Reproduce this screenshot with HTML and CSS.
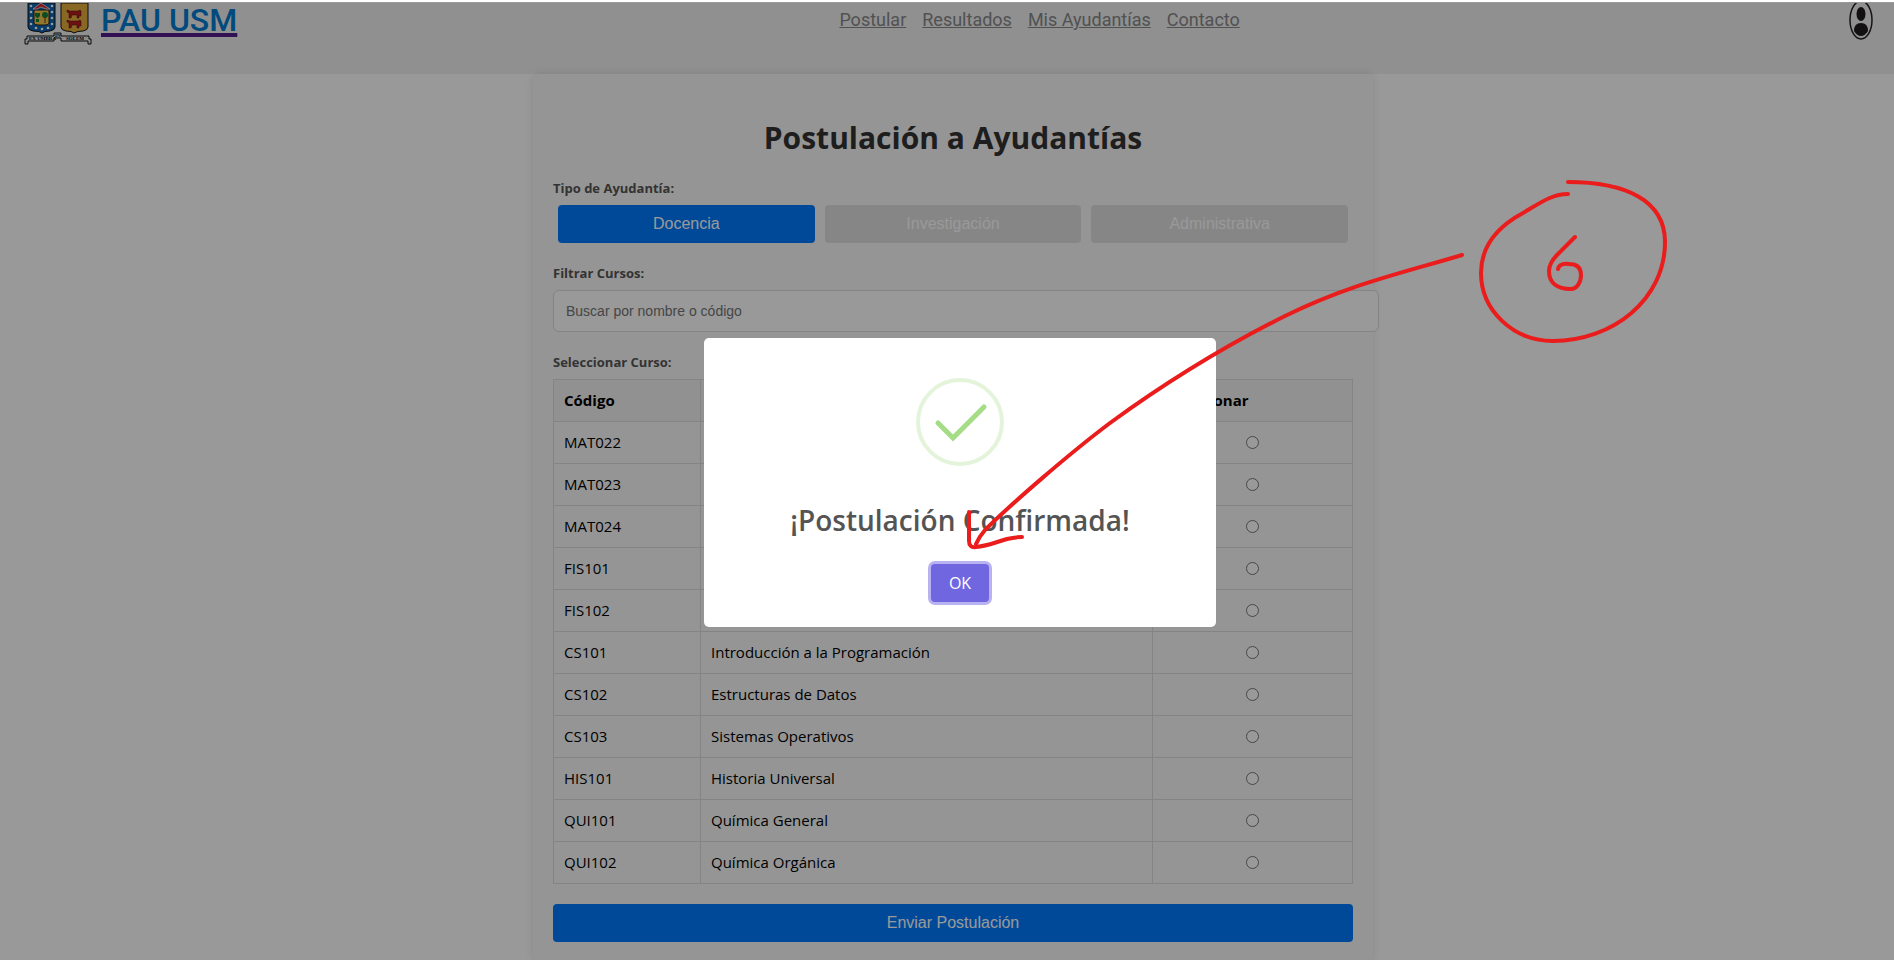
FILE: index.html
```html
<!DOCTYPE html>
<html lang="es">
<head>
<meta charset="utf-8">
<title>PAU USM</title>
<link rel="stylesheet" href="styles.css">
</head>
<body>
<div class="page">
  <header class="header">
    <a class="brand" href="#">
      <svg class="crest" viewBox="0 0 72 44" aria-hidden="true">
        <path d="M4 0H31V24Q31 27 26 28Q20 28 18 30Q16 28 9 28Q4 27 4 24Z" fill="#0c63b0" stroke="#111"/>
        <g fill="#fff"><circle cx="7" cy="3" r="1.3"/><circle cx="7" cy="9" r="1.3"/><circle cx="7" cy="15" r="1.3"/><circle cx="7" cy="21" r="1.3"/><circle cx="12" cy="25" r="1.3"/><circle cx="18" cy="26" r="1.3"/><circle cx="24" cy="25" r="1.3"/><circle cx="28" cy="21" r="1.3"/><circle cx="28" cy="15" r="1.3"/><circle cx="28" cy="9" r="1.3"/><circle cx="28" cy="3" r="1.3"/></g>
        <path d="M10 7H25V20Q25 22 21 22H14Q10 22 10 20Z" fill="#f2c54a" stroke="#222"/>
        <path d="M9 6L17 0L26 6H22L17 4L13 6Z" fill="#d9232e" stroke="#fff" stroke-width=".7"/>
        <path d="M11 10h5v3l-2 2h-1l-2-2zM12 16h3v3h-3z" fill="#16803a"/><circle cx="21" cy="12" r="3" fill="#16803a"/><path d="M21 14V20" stroke="#553a10"/>
        <path d="M37 0H64V24Q64 27 59 28Q53 28 50 30Q48 28 42 28Q37 27 37 24Z" fill="#e5ae3c" stroke="#111"/>
        <g fill="#b81c20" stroke="#401010" stroke-width=".5"><path d="M43 7l3 1h8l2-1 1 1v5h-2v2h-2v-3h-5l-1 3h-2v-5l-2-1z"/><path d="M43 17l3 1h8l2-1 1 1v5h-2v2h-2v-3h-5l-1 3h-2v-5l-2-1z"/></g>
        <path d="M3 33H30V30H37V33H65V36H67V41H64V38H37V35H30V38H4V41H1V36H3Z" fill="#e8e8e8" stroke="#111"/>
        <g class="motto"><text x="5" y="37">EX UMBRA</text><text x="31" y="34">IN</text><text x="42" y="37">SOLEM</text></g>
      </svg>
      <span class="brand-name">PAU USM</span>
    </a>
    <nav class="nav">
      <a href="#">Postular</a>
      <a href="#">Resultados</a>
      <a href="#">Mis Ayudantías</a>
      <a href="#">Contacto</a>
    </nav>
    <a class="user" href="#" aria-label="Perfil">
      <svg viewBox="0 0 26 38" aria-hidden="true"><ellipse cx="13" cy="17" rx="11" ry="19" fill="none" stroke="#222" stroke-width="1.5"/><ellipse cx="13" cy="11" rx="4.5" ry="7" fill="#201c1e"/><path d="M6 28Q6 20 13 20Q20 20 20 28Q17 33 13 33Q9 33 6 28Z" fill="#201c1e"/></svg>
    </a>
  </header>
  <main class="main">
    <form class="card">
      <h1>Postulación a Ayudantías</h1>
      <span class="label" id="tipo">Tipo de Ayudantía:</span>
      <div class="types" role="group" aria-labelledby="tipo">
        <button type="button" class="btn">Docencia</button>
        <button type="button" class="btn" disabled>Investigación</button>
        <button type="button" class="btn" disabled>Administrativa</button>
      </div>
      <label class="label" for="filtro">Filtrar Cursos:</label>
      <input class="filter" id="filtro" type="text" placeholder="Buscar por nombre o código">
      <span class="label" id="curso">Seleccionar Curso:</span>
      <table class="courses" aria-labelledby="curso">
        <colgroup><col class="col-code"><col><col class="col-select"></colgroup>
        <thead><tr><th>Código</th><th></th><th>Seleccionar</th></tr></thead>
        <tbody>
          <tr><td>MAT022</td><td></td><td><input type="radio" name="c" aria-label="MAT022"></td></tr>
          <tr><td>MAT023</td><td></td><td><input type="radio" name="c" aria-label="MAT023"></td></tr>
          <tr><td>MAT024</td><td></td><td><input type="radio" name="c" aria-label="MAT024"></td></tr>
          <tr><td>FIS101</td><td></td><td><input type="radio" name="c" aria-label="FIS101"></td></tr>
          <tr><td>FIS102</td><td></td><td><input type="radio" name="c" aria-label="FIS102"></td></tr>
          <tr><td>CS101</td><td>Introducción a la Programación</td><td><input type="radio" name="c" aria-label="CS101"></td></tr>
          <tr><td>CS102</td><td>Estructuras de Datos</td><td><input type="radio" name="c" aria-label="CS102"></td></tr>
          <tr><td>CS103</td><td>Sistemas Operativos</td><td><input type="radio" name="c" aria-label="CS103"></td></tr>
          <tr><td>HIS101</td><td>Historia Universal</td><td><input type="radio" name="c" aria-label="HIS101"></td></tr>
          <tr><td>QUI101</td><td>Química General</td><td><input type="radio" name="c" aria-label="QUI101"></td></tr>
          <tr><td>QUI102</td><td>Química Orgánica</td><td><input type="radio" name="c" aria-label="QUI102"></td></tr>
        </tbody>
      </table>
      <button type="submit" class="btn submit">Enviar Postulación</button>
    </form>
  </main>
</div>
<div class="overlay">
  <div class="modal" role="dialog" aria-modal="true" aria-labelledby="done">
    <svg class="check" viewBox="0 0 88 88" aria-hidden="true"><circle cx="44" cy="44" r="42" fill="none" stroke="#e4f4db" stroke-width="4"/><path d="M22 45L37 60L68 29" fill="none" stroke="#a5dc86" stroke-width="5" stroke-linecap="round"/></svg>
    <h2 id="done">¡Postulación Confirmada!</h2>
    <button type="button" class="ok">OK</button>
  </div>
</div>
<svg class="ink" width="1894" height="960" viewBox="0 0 1894 960" aria-hidden="true">
  <path d="M1462 255C1395 275 1348 285 1285 316C1225 346 1165 383 1110 423C1070 453 1010 505 985 530Q979 537 976 544"/>
  <path d="M969 512V541Q969 548 976 547C988 546 996 542 1007 539Q1015 537 1022 537"/>
  <path d="M1568 194C1552 194 1540 203 1523 213C1510 220 1481 237 1481 273C1481 310 1513 341 1553 341C1612 341 1665 300 1665 242C1665 200 1625 182 1568 182"/>
  <path d="M1575 237L1557 255C1551 261 1549 265 1549 271C1549 283 1557 289 1571 289C1577 289 1581 282 1581 275C1581 267 1576 264 1569 264C1562 263 1559 265 1558 269"/>
</svg>
</body>
</html>
```
FILE: styles.css
```css
body {
  margin: 0;
  background: #fff;
  font-family: "Segoe UI", "Open Sans", "Noto Sans", sans-serif;
}

.page {
  height: 100vh;
  box-sizing: border-box;
  padding-top: 3px;
  overflow: hidden;
}

.header {
  display: flex;
  justify-content: space-between;
  align-items: flex-start;
  min-height: 71px;
  padding: 0 15px 0 24px;
  box-sizing: border-box;
  background: #f0f0f0;
  font-family: Roboto, sans-serif;
}

.brand {
  display: flex;
  gap: 5px;
  color: #551a8b;
}

.crest {
  width: 72px;
  height: 44px;
}

.motto {
  font: bold 5px "Liberation Serif", serif;
}

.brand-name {
  font-size: 32px;
  font-weight: 500;
  line-height: 34px;
  color: #007cd0;
  text-decoration: underline #551a8b 3px;
  text-underline-offset: 3px;
}

.nav {
  display: flex;
  gap: 16px;
  font-size: 18px;
  line-height: 34px;
}

.nav a {
  color: #888;
}

.user {
  display: flex;
  justify-content: center;
  width: 37px;
}

.user svg {
  width: 26px;
  height: 38px;
}

.main {
  padding-left: 12px;
}

.card {
  max-width: 800px;
  margin: 0 auto;
  padding: 20px;
  border-radius: 8px;
  background: #f9f9f9;
  box-shadow: 0 0 10px rgba(0, 0, 0, 0.1);
}

.card h1 {
  margin: 20px 0 18px;
  font-size: 30px;
  line-height: 48px;
  text-align: center;
  color: #333;
}

.label {
  display: block;
  margin-bottom: 9px;
  font-size: 13px;
  font-weight: bold;
  line-height: 16px;
  color: #555;
}

.types {
  display: flex;
  margin-bottom: 22px;
}

.btn {
  flex: 1;
  margin: 0 5px;
  padding: 10px;
  border: 0;
  border-radius: 4px;
  background: #007bff;
  color: #fff;
  font: 16px/18px "Liberation Sans", Arial, sans-serif;
}

.btn:disabled {
  background: #e0e0e0;
}

.filter {
  box-sizing: content-box;
  width: 100%;
  height: 16px;
  margin: 0 0 22px;
  padding: 12px;
  border: 1px solid #ddd;
  border-radius: 6px;
  background: #fff;
  font: 14px/16px "Liberation Sans", Arial, sans-serif;
}

.courses {
  width: 100%;
  margin-bottom: 20px;
  border-collapse: collapse;
  table-layout: fixed;
}

.col-code {
  width: 147px;
}

.col-select {
  width: 200px;
}

.courses th,
.courses td {
  height: 21px;
  padding: 10px;
  border: 1px solid #ddd;
  font-size: 15px;
  line-height: 21px;
  text-align: left;
}

.courses th {
  background: #f2f2f2;
}

.courses td:last-child {
  padding: 0;
  text-align: center;
}

.courses input {
  display: block;
  margin: 0 auto;
}

.submit {
  width: 100%;
  margin: 0;
}

.overlay {
  position: fixed;
  inset: 2px 0 0;
  display: flex;
  align-items: center;
  justify-content: center;
  padding: 2px 0 0 26px;
  background: rgba(0, 0, 0, 0.4);
}

.modal {
  display: flex;
  flex-direction: column;
  align-items: center;
  box-sizing: border-box;
  width: 512px;
  padding: 40px 20px 25px;
  border-radius: 5px;
  background: #fff;
}

.check {
  width: 88px;
  height: 88px;
}

.modal h2 {
  margin: 32px 0 22px;
  font-size: 28px;
  font-weight: 600;
  line-height: 44px;
  color: #545454;
}

.ok {
  padding: 10px 18px;
  border: 0;
  border-radius: 4px;
  background: #7066e0;
  box-shadow: 0 0 0 3px #b8b2f0;
  color: #fff;
  font: 500 16px/18px "Open Sans", sans-serif;
}

.ink {
  position: absolute;
  top: 0;
  left: 0;
  pointer-events: none;
}

.ink path {
  fill: none;
  stroke: #ea1c1c;
  stroke-width: 4;
  stroke-linecap: round;
  stroke-linejoin: round;
}
```
